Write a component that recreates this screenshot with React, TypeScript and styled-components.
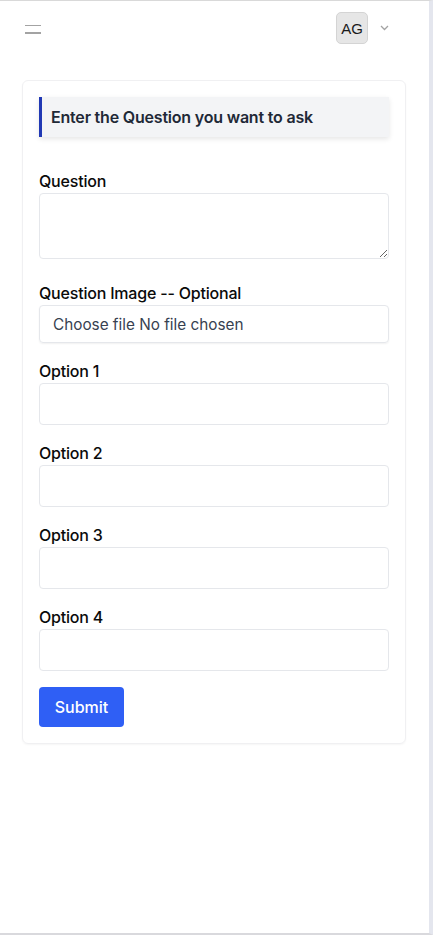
import React from 'react';
import styled, { createGlobalStyle } from 'styled-components';

const GlobalStyle = createGlobalStyle`
  html, body {
    margin: 0;
    padding: 0;
    background: #ffffff;
  }
  body {
    font-family: Inter, 'Noto Sans', 'Liberation Sans', sans-serif;
    color: #111111;
  }
  * {
    box-sizing: border-box;
  }
`;

const Shell = styled.div`
  height: 935px;
  border-top: 1px solid #d9d9d9;
  border-right: 4px solid #e4e6ee;
  border-bottom: 2px solid #d9d9dd;
  background: #ffffff;
`;

const TopBar = styled.header`
  display: flex;
  align-items: center;
  justify-content: space-between;
  padding: 10px 40px 0 25px;
  height: 44px;
`;

const Burger = styled.button`
  display: flex;
  flex-direction: column;
  gap: 6px;
  width: 16px;
  padding: 0;
  border: none;
  background: none;
  margin-top: 2px;

  span {
    display: block;
    height: 1.5px;
    background: #a3a3a3;
  }
`;

const UserMenu = styled.div`
  display: flex;
  align-items: center;
  gap: 12px;
`;

const Avatar = styled.div`
  width: 32px;
  height: 32px;
  border-radius: 5px;
  background: #e6e6e6;
  border: 1px solid #d4d4d4;
  display: flex;
  align-items: center;
  justify-content: center;
  font-family: 'Liberation Sans', Arial, sans-serif;
  font-size: 15px;
  color: #1a1a1a;
`;

const Card = styled.section`
  margin: 35px 23px 0 22px;
  padding: 16px;
  border: 1px solid #f0f0f2;
  border-radius: 6px;
  box-shadow: 0 1px 2px rgba(0, 0, 0, 0.04);
`;

const Banner = styled.div`
  height: 40px;
  display: flex;
  align-items: center;
  padding-left: 9px;
  border-left: 3px solid #2139b4;
  background: #f3f4f6;
  box-shadow: 0 2px 5px rgba(0, 0, 0, 0.1);
  font-size: 16px;
  font-weight: 600;
  color: #1f2937;
  letter-spacing: -0.2px;
`;

const Form = styled.form`
  display: flex;
  flex-direction: column;
  margin-top: 32px;
`;

const Field = styled.div<{ $gap?: number }>`
  display: flex;
  flex-direction: column;
  margin-bottom: ${(p) => p.$gap ?? 16}px;
`;

const Label = styled.label`
  font-size: 16px;
  font-weight: 500;
  line-height: 24px;
  color: #0a0a0a;
  letter-spacing: -0.2px;
`;

const TextArea = styled.textarea`
  display: block;
  height: 66px;
  width: 100%;
  border: 1px solid #e5e7eb;
  border-radius: 4px;
  resize: vertical;
  font: inherit;
`;

const Input = styled.input`
  display: block;
  height: 42px;
  width: 100%;
  border: 1px solid #e5e7eb;
  border-radius: 4px;
  font: inherit;
`;

const FileBox = styled.div`
  height: 38px;
  display: flex;
  align-items: center;
  padding-left: 13px;
  border: 1px solid #e5e7eb;
  border-radius: 4px;
  box-shadow: 0 1px 2px rgba(0, 0, 0, 0.06);
  font-size: 15.3px;
  color: #374151;
`;

const SubmitButton = styled.button`
  align-self: flex-start;
  width: 85px;
  height: 40px;
  border: none;
  border-radius: 4px;
  background: #2f5ff5;
  color: #ffffff;
  font-family: inherit;
  font-size: 16px;
  font-weight: 500;
`;

const options = ['Option 1', 'Option 2', 'Option 3', 'Option 4'];

const App = () => {
  return (
    <Shell>
      <GlobalStyle />
      <TopBar>
        <Burger type="button" aria-label="menu">
          <span />
          <span />
        </Burger>
        <UserMenu>
          <Avatar>AG</Avatar>
          <svg width="9" height="6" viewBox="0 0 9 6" fill="none">
            <path d="M1 1l3.5 3.5L8 1" stroke="#a3a3a3" strokeWidth="1.3" />
          </svg>
        </UserMenu>
      </TopBar>
      <Card>
        <Banner>Enter the Question you want to ask</Banner>
        <Form onSubmit={(e) => e.preventDefault()}>
          <Field $gap={22}>
            <Label>Question</Label>
            <TextArea />
          </Field>
          <Field>
            <Label>Question Image -- Optional</Label>
            <FileBox>Choose file No file chosen</FileBox>
          </Field>
          {options.map((o) => (
            <Field key={o}>
              <Label>{o}</Label>
              <Input />
            </Field>
          ))}
          <SubmitButton type="submit">Submit</SubmitButton>
        </Form>
      </Card>
    </Shell>
  );
};

export default App;
